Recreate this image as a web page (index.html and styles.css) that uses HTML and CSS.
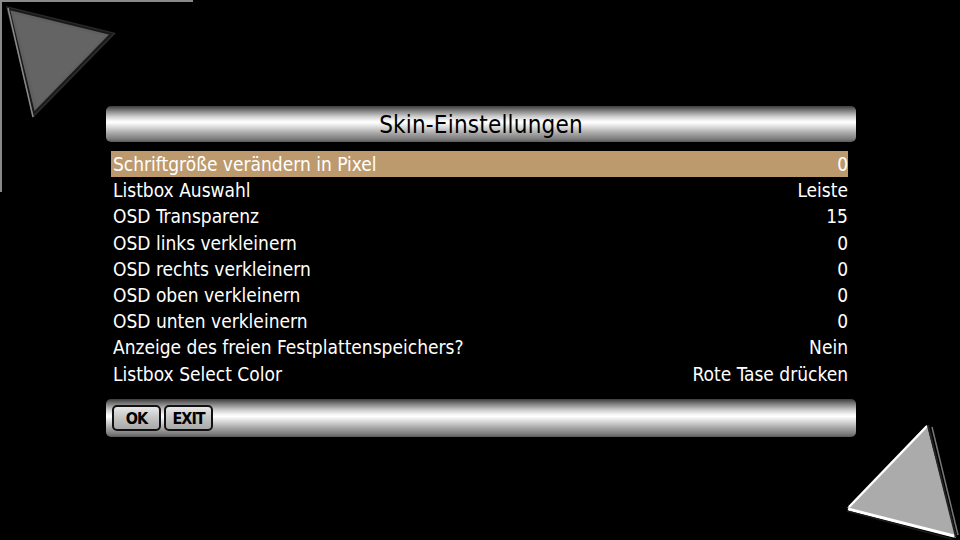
FILE: index.html
```html
<!DOCTYPE html>
<html lang="de">
<head>
    <meta charset="UTF-8">
    <title>Skin-Einstellungen</title>
    <link rel="stylesheet" href="styles.css">
</head>
<body>
    <!-- corner ornaments -->
    <div class="corner corner-tl">
        <svg width="200" height="200" viewBox="0 0 200 200">
            <path d="M0 1 H193 M1 0 V192" stroke="#8a8a8a" stroke-width="2" fill="none"/>
            <polygon points="6,6 116,33 33,118" fill="#2a2a2a"/>
            <polygon points="9,9 111,34 34,113" fill="#606060" stroke="#1a1a1a" stroke-width="2"/>
            <polygon points="14,14 104,36 37,106" fill="#646464"/>
            <path d="M8 8 L33 117" stroke="#8a8a8a" stroke-width="1.5"/>
        </svg>
    </div>
    <div class="corner corner-br">
        <svg width="200" height="130" viewBox="0 0 200 130">
            <polygon points="87,98 167,15 196,128" fill="#ababab"/>
            <path d="M89 97 L167 16" stroke="#ffffff" stroke-width="2.5"/>
            <path d="M88 99 L194 126" stroke="#ffffff" stroke-width="3"/>
            <path d="M87 101 L192 129" stroke="#1a1a1a" stroke-width="1.5"/>
            <path d="M168 15 L196 127" stroke="#222" stroke-width="2"/>
            <path d="M172 17 L198 125" stroke="#777" stroke-width="1.5"/>
        </svg>
    </div>

    <div class="panel">
        <div class="bar title-bar">Skin-Einstellungen</div>

        <div class="list">
            <div class="row selected"><span>Schriftgröße verändern in Pixel</span><span>0</span></div>
            <div class="row"><span>Listbox Auswahl</span><span>Leiste</span></div>
            <div class="row"><span>OSD Transparenz</span><span>15</span></div>
            <div class="row"><span>OSD links verkleinern</span><span>0</span></div>
            <div class="row"><span>OSD rechts verkleinern</span><span>0</span></div>
            <div class="row"><span>OSD oben verkleinern</span><span>0</span></div>
            <div class="row"><span>OSD unten verkleinern</span><span>0</span></div>
            <div class="row"><span>Anzeige des freien Festplattenspeichers?</span><span>Nein</span></div>
            <div class="row"><span>Listbox Select Color</span><span>Rote Tase drücken</span></div>
        </div>

        <div class="bar button-bar">
            <span class="key">OK</span>
            <span class="key">EXIT</span>
        </div>
    </div>
</body>
</html>
```

FILE: styles.css
```css
body {
    margin: 0;
    padding: 0;
    width: 960px;
    height: 540px;
    background: #000;
    color: #fff;
    font-family: 'DejaVu Sans Condensed', 'Liberation Sans Narrow', 'Liberation Sans', sans-serif;
    overflow: hidden;
    position: relative;
}

.corner {
    position: absolute;
}

.corner svg {
    display: block;
}

.corner-tl {
    top: 0;
    left: 0;
}

.corner-br {
    left: 760px;
    top: 410px;
}

.panel {
    width: 750px;
    margin: 106px 0 0 106px;
}

.bar {
    border-radius: 5px;
    background: linear-gradient(to bottom, #3c3c3c 0%, #7a7a7a 12%, #c8c8c8 28%, #f4f4f4 40%, #ffffff 46%, #d0d0d0 62%, #a0a0a0 78%, #7c7c7c 92%, #5a5a5a 100%);
}

.title-bar {
    height: 36px;
    line-height: 38px;
    text-align: center;
    color: #000;
    font-size: 24px;
    letter-spacing: 0.2px;
}

.list {
    margin: 9px 8px 0 5px;
    height: 236px;
}

.row {
    display: flex;
    justify-content: space-between;
    height: 26.2px;
    line-height: 26px;
    font-size: 19px;
    padding: 0 0 0 2px;
}

.row.selected {
    background: #bc9a6e;
}

.button-bar {
    margin-top: 12px;
    height: 38px;
    display: flex;
    align-items: center;
    gap: 3px;
    padding-left: 6px;
}

.key {
    width: 45px;
    height: 22px;
    border: 2px solid #111;
    border-radius: 5px;
    background: linear-gradient(to bottom, #e8e8e8, #c4c4c4 50%, #a8a8a8);
    color: #000;
    font-weight: bold;
    font-size: 16px;
    line-height: 23px;
    text-align: center;
    letter-spacing: -1px;
}
```
